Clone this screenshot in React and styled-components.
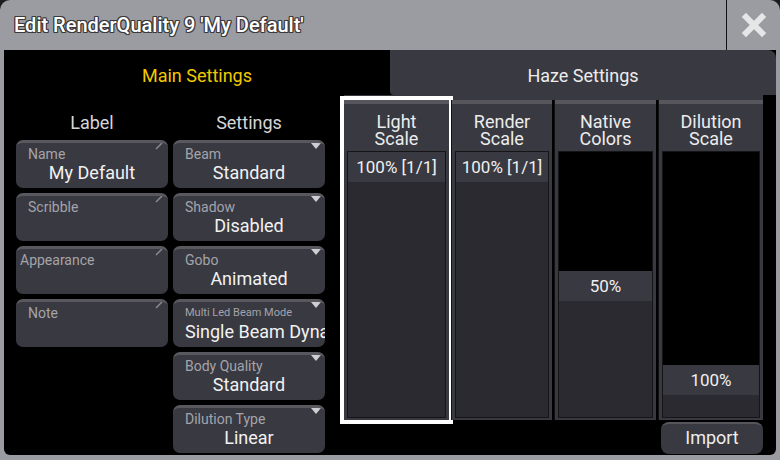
import React from "react";
import styled, { createGlobalStyle } from "styled-components";

const GlobalStyle = createGlobalStyle`
  html, body {
    margin: 0;
    padding: 0;
    background: #1c1c1e;
  }
  body {
    font-family: Roboto, "Liberation Sans", sans-serif;
  }
`;

const Window = styled.div`
  width: 780px;
  height: 460px;
  background: #9b9ca1;
  border-radius: 10px 10px 0 0;
  overflow: hidden;
  display: flex;
  flex-direction: column;
`;

const TitleBar = styled.div`
  height: 50px;
  display: flex;
  align-items: stretch;
`;

const Title = styled.div`
  flex: 1;
  display: flex;
  align-items: center;
  padding-left: 14px;
  font-size: 20px;
  font-weight: 500;
  color: #fff;
  text-shadow: 1px 0 0 #3a3a3e, -1px 0 0 #3a3a3e, 0 1px 0 #3a3a3e,
    0 -1px 0 #3a3a3e, 1px 1px 0 #3a3a3e, -1px -1px 0 #3a3a3e,
    1px -1px 0 #3a3a3e, -1px 1px 0 #3a3a3e;
`;

const CloseButton = styled.div`
  width: 53px;
  border-left: 1px solid #111;
  display: flex;
  align-items: center;
  justify-content: center;
`;

const Content = styled.div`
  margin: 0 4px;
  height: 405px;
  background: #000;
  border-radius: 0 0 6px 6px;
  display: flex;
  flex-direction: column;
`;

const Tabs = styled.div`
  height: 45px;
  display: flex;
`;

const Tab = styled.div`
  width: ${(p) => (p.$active ? "386px" : "auto")};
  flex: ${(p) => (p.$active ? "none" : "1")};
  background: ${(p) => (p.$active ? "#000" : "#393941")};
  color: ${(p) => (p.$active ? "#f2c900" : "#ececec")};
  border-radius: ${(p) => (p.$active ? "0" : "0 8px 0 4px")};
  font-size: 18px;
  display: flex;
  align-items: center;
  justify-content: center;
  padding-top: 6px;
  box-sizing: border-box;
`;

const Main = styled.div`
  flex: 1;
  display: flex;
`;

const LeftPanel = styled.div`
  width: 336px;
  padding: 18px 0 0 12px;
  box-sizing: border-box;
  display: grid;
  grid-template-columns: 152px 152px;
  column-gap: 5px;
  align-content: start;
`;

const Stack = styled.div`
  display: flex;
  flex-direction: column;
  gap: 5px;
`;

const ColumnTitle = styled.div`
  height: 20px;
  line-height: 20px;
  margin-bottom: 2px;
  text-align: center;
  font-size: 18px;
  color: #d6d6d8;
`;

const Field = styled.div`
  position: relative;
  height: 48px;
  box-sizing: border-box;
  background: #393941;
  border-top: 3px solid #58585e;
  border-radius: 7px;
  overflow: hidden;
  padding-top: 3px;
`;

const FieldLabel = styled.div`
  height: 16px;
  line-height: 16px;
  padding-left: ${(p) => (p.$tight ? "4px" : "12px")};
  font-size: ${(p) => (p.$small ? "11px" : "14px")};
  color: #a4a4aa;
  white-space: nowrap;
`;

const FieldValue = styled.div`
  height: 22px;
  line-height: 22px;
  padding: 0 12px;
  text-align: center;
  font-size: 18px;
  color: #f2f2f2;
  white-space: nowrap;
  overflow: hidden;
`;

const EditMark = styled.svg`
  position: absolute;
  top: -1px;
  right: 5px;
`;

const DropMark = styled.div`
  position: absolute;
  top: 0;
  right: 4px;
  width: 0;
  height: 0;
  border-left: 5px solid transparent;
  border-right: 5px solid transparent;
  border-top: 6px solid #cfcfd3;
`;

const RightPanel = styled.div`
  flex: 1;
  padding: 0 13px 0 4px;
  display: flex;
  flex-direction: column;
`;

const Grid = styled.div`
  height: 325px;
  box-sizing: border-box;
  border-top: 5px solid #393941;
  display: grid;
  grid-template-columns: 105px 100px 101px 1fr;
  gap: 3px;
`;

const Column = styled.div`
  display: flex;
  flex-direction: column;
  background: #393941;
  border-top: 4px solid #56565c;
  outline: ${(p) => (p.$selected ? "4px solid #fff" : "none")};
  box-shadow: -1px 0 0 #111;
`;

const ColumnHead = styled.div`
  height: 47px;
  display: flex;
  flex-direction: column;
  align-items: center;
  justify-content: center;
  font-size: 18px;
  line-height: 17px;
  color: #ececec;
  padding-top: 4px;
  box-sizing: border-box;
`;

const ColumnBody = styled.div`
  flex: 1;
  margin: 0 3px 2px;
  border: 1px solid #151518;
  background: #000;
  display: flex;
  flex-direction: column;
`;

const Spacer = styled.div`
  height: ${(p) => p.$h}px;
  flex: none;
`;

const ValueRow = styled.div`
  height: 30px;
  line-height: 31px;
  background: #393941;
  text-align: center;
  font-size: 17px;
  color: #f0f0f0;
`;

const Rest = styled.div`
  flex: 1;
  background: #2a2a30;
`;

const ImportRow = styled.div`
  display: flex;
  justify-content: flex-end;
  margin-top: 2px;
`;

const ImportButton = styled.div`
  width: 102px;
  height: 32px;
  box-sizing: border-box;
  background: #393941;
  border-top: 2px solid #55555b;
  border-radius: 8px;
  display: flex;
  align-items: center;
  justify-content: center;
  padding-bottom: 3px;
  font-size: 18px;
  color: #ededed;
`;

const labels = [
  { label: "Name", value: "My Default" },
  { label: "Scribble" },
  { label: "Appearance", tight: true },
  { label: "Note" },
];

const settings = [
  { label: "Beam", value: "Standard" },
  { label: "Shadow", value: "Disabled" },
  { label: "Gobo", value: "Animated" },
  { label: "Multi Led Beam Mode", value: "Single Beam Dynamic", small: true },
  { label: "Body Quality", value: "Standard" },
  { label: "Dilution Type", value: "Linear" },
];

const columns = [
  { title: ["Light", "Scale"], value: "100% [1/1]", offset: 0, selected: true },
  { title: ["Render", "Scale"], value: "100% [1/1]", offset: 0 },
  { title: ["Native", "Colors"], value: "50%", offset: 119 },
  { title: ["Dilution", "Scale"], value: "100%", offset: 213 },
];

const CloseIcon = () => (
  <svg width="24" height="24" viewBox="0 0 24 24">
    <path d="M4 4 L20 20 M20 4 L4 20" stroke="#e6e6e8" strokeWidth="6" strokeLinecap="square" />
  </svg>
);

const App = () => {
  return (
    <>
      <GlobalStyle />
      <Window>
        <TitleBar>
          <Title>Edit RenderQuality 9 'My Default'</Title>
          <CloseButton>
            <CloseIcon />
          </CloseButton>
        </TitleBar>
        <Content>
          <Tabs>
            <Tab $active>Main Settings</Tab>
            <Tab>Haze Settings</Tab>
          </Tabs>
          <Main>
            <LeftPanel>
              <Stack>
                <ColumnTitle>Label</ColumnTitle>
                {labels.map((f) => (
                  <Field key={f.label}>
                    <EditMark width="8" height="8" viewBox="0 0 8 8">
                      <path d="M1 7 L7 1" stroke="#8a8a90" strokeWidth="1.5" />
                    </EditMark>
                    <FieldLabel $tight={f.tight}>{f.label}</FieldLabel>
                    <FieldValue>{f.value}</FieldValue>
                  </Field>
                ))}
              </Stack>
              <Stack>
                <ColumnTitle>Settings</ColumnTitle>
                {settings.map((f) => (
                  <Field key={f.label}>
                    <DropMark />
                    <FieldLabel $small={f.small}>{f.label}</FieldLabel>
                    <FieldValue>{f.value}</FieldValue>
                  </Field>
                ))}
              </Stack>
            </LeftPanel>
            <RightPanel>
              <Grid>
                {columns.map((c) => (
                  <Column key={c.title.join(" ")} $selected={c.selected}>
                    <ColumnHead>
                      <span>{c.title[0]}</span>
                      <span>{c.title[1]}</span>
                    </ColumnHead>
                    <ColumnBody>
                      <Spacer $h={c.offset} />
                      <ValueRow>{c.value}</ValueRow>
                      <Rest />
                    </ColumnBody>
                  </Column>
                ))}
              </Grid>
              <ImportRow>
                <ImportButton>Import</ImportButton>
              </ImportRow>
            </RightPanel>
          </Main>
        </Content>
      </Window>
    </>
  );
};

export default App;
